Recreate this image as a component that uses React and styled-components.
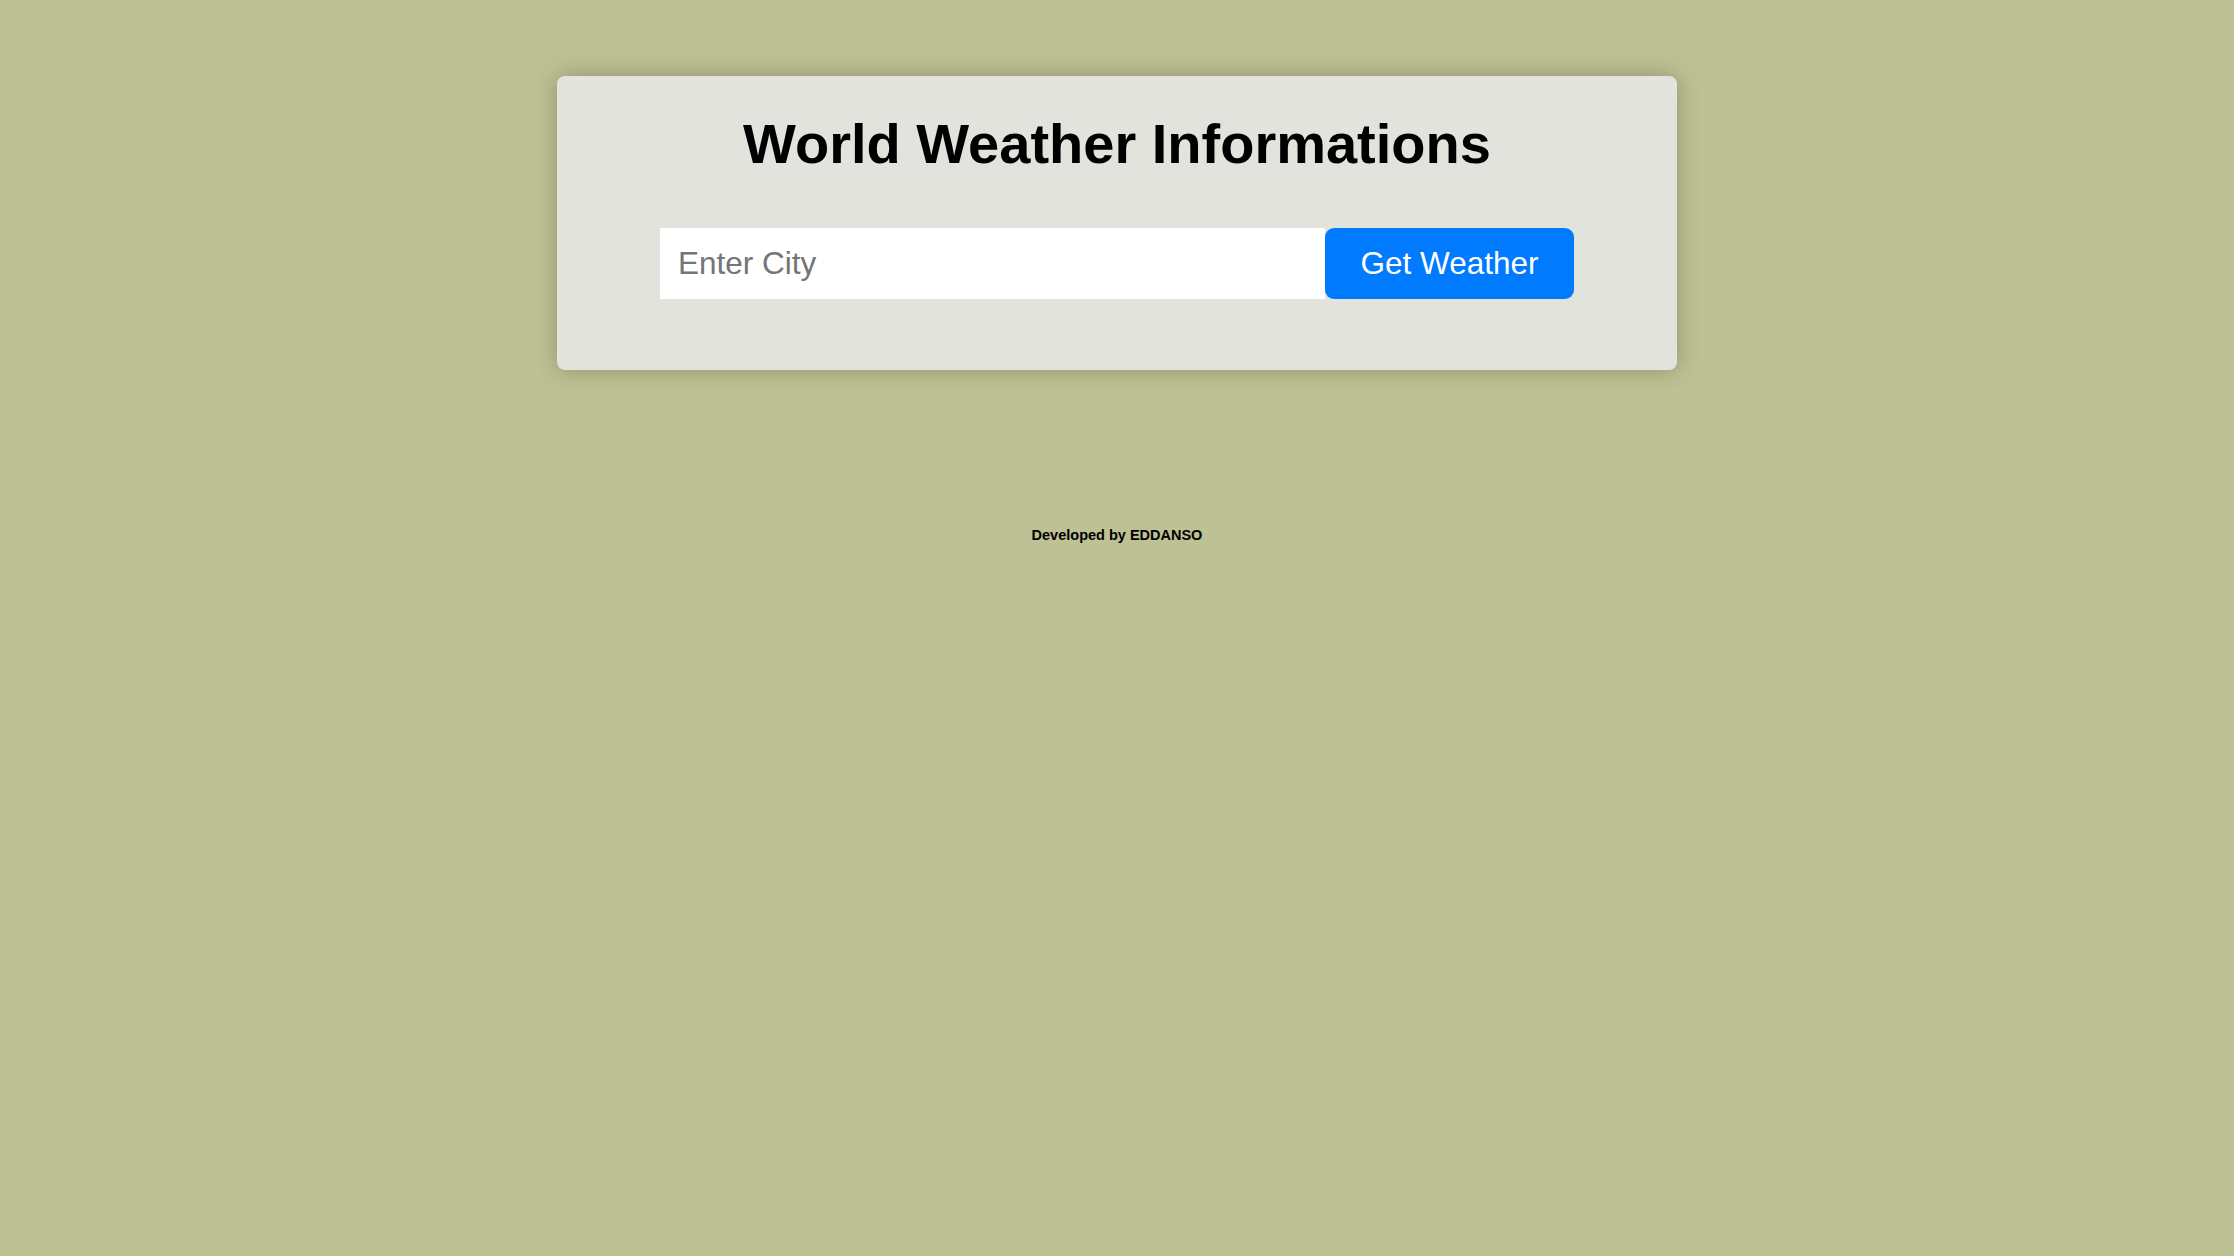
import React from 'react';
import styled, { createGlobalStyle } from 'styled-components';

const GlobalStyle = createGlobalStyle`
	html, body {
		margin: 0;
		padding: 0;
		background-color: #bdc194;
		font-family: "Liberation Sans", Arial, sans-serif;
	}
	body {
		min-height: 1256px;
	}
`;

const Page = styled.div`
	display: flex;
	flex-direction: column;
	align-items: center;
	padding-top: 76px;
`;

const Card = styled.div`
	width: 1120px;
	box-sizing: border-box;
	background-color: #e2e3dd;
	border-radius: 8px;
	box-shadow: 0 0 22px rgba(60, 62, 30, 0.35);
	padding: 36px 0 71px;
	display: flex;
	flex-direction: column;
	align-items: center;
`;

const Title = styled.h1`
	margin: 0 0 53px;
	font-size: 56px;
	font-weight: bold;
	color: #000;
	line-height: 63px;
`;

const SearchRow = styled.form`
	display: flex;
	flex-direction: row;
	width: 914px;
	height: 71px;
`;

const CityInput = styled.input`
	flex: 1;
	border: none;
	outline: none;
	background: #fff;
	padding: 0 18px;
	font-family: "Liberation Sans", Arial, sans-serif;
	font-size: 31.5px;
	color: #222;
	&::placeholder {
		color: #757575;
	}
`;

const Button = styled.button`
	width: 249px;
	border: none;
	border-radius: 9px;
	background-color: #007bff;
	color: #fff;
	font-family: "Liberation Sans", Arial, sans-serif;
	font-size: 31.5px;
	cursor: pointer;
`;

const Footer = styled.p`
	margin: 157px 0 0;
	font-size: 14.5px;
	font-weight: bold;
	color: #000;
`;

const App = () => {
	return (
		<>
			<GlobalStyle />
			<Page>
				<Card>
					<Title>World Weather Informations</Title>
					<SearchRow onSubmit={e => e.preventDefault()}>
						<CityInput type="text" placeholder="Enter City" />
						<Button type="submit">Get Weather</Button>
					</SearchRow>
				</Card>
				<Footer>Developed by EDDANSO</Footer>
			</Page>
		</>
	);
};

export default App;
